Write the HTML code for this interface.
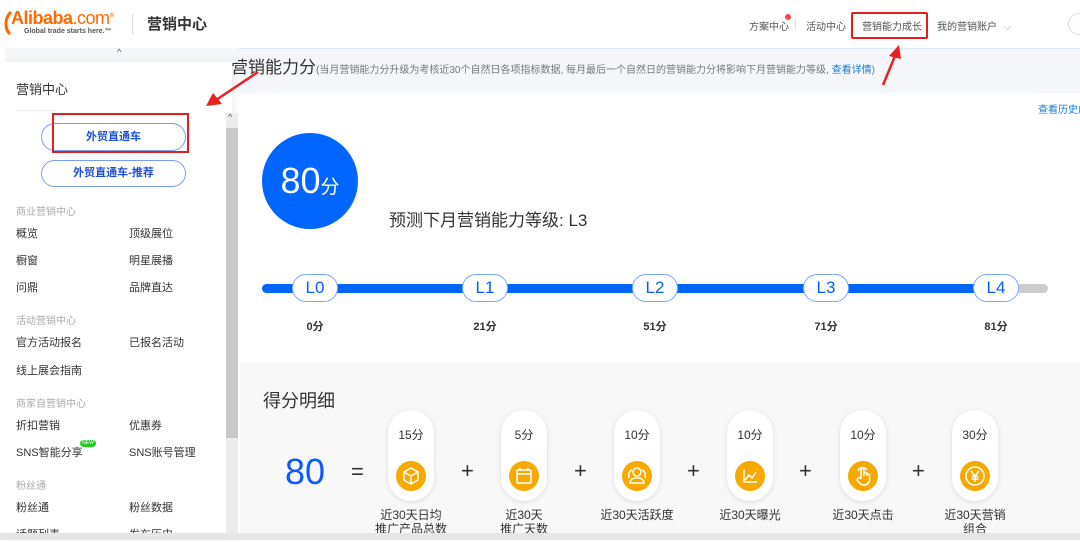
<!DOCTYPE html>
<html><head><meta charset="utf-8"><style>
*{margin:0;padding:0;box-sizing:border-box}
body{width:1080px;height:540px;overflow:hidden;background:#fff;font-family:"Liberation Sans","Noto Sans CJK SC",sans-serif;position:relative;color:#333}
.a{position:absolute;white-space:nowrap}
.nav{font-size:10px;color:#555;top:18px}
.pill{position:absolute;width:46px;height:28px;border:1.5px solid #7aa8ff;border-radius:14px;background:#fff;color:#0a5cff;font-size:17px;text-align:center;line-height:25px;top:274px}
.sc{position:absolute;top:318px;font-size:11px;font-weight:bold;color:#333;width:40px;text-align:center}
.cap{position:absolute;top:410px;width:46px;height:91px;background:#fff;border-radius:23px;box-shadow:0 1px 5px rgba(0,0,0,.12)}
.cap .t{position:absolute;top:16px;width:100%;text-align:center;font-size:12px;color:#333}
.cap svg{position:absolute;left:8px;top:51px}
.lb{position:absolute;top:508px;width:90px;text-align:center;font-size:12px;color:#333;line-height:14px}
.plus{position:absolute;top:458px;font-size:22px;color:#333}
.m{font-size:11px;color:#333;position:absolute}
.g{font-size:10px;color:#aaa;position:absolute}
</style></head><body>
<!-- header -->
<svg class="a" style="left:2px;top:10px" width="20" height="26"><path d="M9 2 C2 8 3 20 8 24" stroke="#ff6a00" stroke-width="3" fill="none"/></svg>
<div class="a" style="left:11px;top:8px;font-size:18px;font-weight:bold;color:#ff6a00;letter-spacing:-0.5px">Alibaba<span style="font-weight:normal">.com</span><sup style="font-size:6px">®</sup></div>
<div class="a" style="left:24px;top:28px;font-size:7px;color:#555;font-weight:bold">Global trade starts here.™</div>
<div class="a" style="left:132px;top:14px;width:1px;height:20px;background:#ddd"></div>
<div class="a" style="left:147px;top:13px;font-size:15px;font-weight:bold;color:#333">营销中心</div>
<div class="a nav" style="left:749px">方案中心</div>
<div class="a" style="left:785px;top:14px;width:6px;height:6px;border-radius:50%;background:#f45"></div>
<div class="a" style="left:795px;top:19px;width:1px;height:10px;background:#ddd"></div>
<div class="a nav" style="left:806px">活动中心</div>
<div class="a nav" style="left:862px">营销能力成长</div>
<div class="a" style="left:851px;top:12px;width:77px;height:27px;border:2px solid #e02020;border-radius:2px"></div>
<div class="a nav" style="left:937px">我的营销账户 <span style="color:#aaa;margin-left:4px">⌵</span></div>
<div class="a" style="left:1068px;top:13px;width:30px;height:22px;border:1px solid #ddd;border-radius:11px"></div>
<!-- main bg -->
<div class="a" style="left:5px;top:48px;width:1075px;height:45px;background:#f4f6f9;border-top:1px solid #dde6f3"></div>
<div class="a" style="left:197px;top:53px;font-size:17px;color:#333">当月营销能力分<span style="font-size:10px;color:#777">(当月营销能力分升级为考核近30个自然日各项指标数据, 每月最后一个自然日的营销能力分将影响下月营销能力等级, <span style="color:#1a7ad8">查看详情</span>)</span></div>
<div class="a" style="left:1038px;top:101px;font-size:10px;color:#1a7ad8">查看历史成</div>
<div class="a" style="left:262px;top:133px;width:96px;height:96px;border-radius:50%;background:#0066ff;color:#fff;text-align:center;line-height:96px;font-size:36px">80<span style="font-size:19px">分</span></div>
<div class="a" style="left:389px;top:206px;font-size:17px;color:#333">预测下月营销能力等级: L3</div>
<div class="a" style="left:262px;top:284px;width:786px;height:9px;border-radius:5px;background:#ccc"></div>
<div class="a" style="left:262px;top:284px;width:756px;height:9px;border-radius:5px;background:#0066ff"></div>
<div class="pill" style="left:292px">L0</div><div class="pill" style="left:462px">L1</div><div class="pill" style="left:632px">L2</div><div class="pill" style="left:803px">L3</div><div class="pill" style="left:973px">L4</div>
<div class="sc" style="left:295px">0分</div><div class="sc" style="left:465px">21分</div><div class="sc" style="left:635px">51分</div><div class="sc" style="left:806px">71分</div><div class="sc" style="left:976px">81分</div>
<!-- lower -->
<div class="a" style="left:240px;top:362px;width:840px;height:172px;background:#f8f8f8"></div>
<div class="a" style="left:263px;top:387px;font-size:18px;color:#333">得分明细</div>
<div class="a" style="left:285px;top:451px;font-size:36px;color:#0a5cff">80</div>
<div class="a" style="left:351px;top:459px;font-size:22px;color:#333">=</div>
<div class="cap" style="left:388px"><div class="t">15分</div><svg width="30" height="30"><circle cx="15" cy="15" r="15" fill="#f7a900"/><g fill="none" stroke="#fff" stroke-width="1.5" stroke-linejoin="round"><path d="M15 7 L22 11 L22 19 L15 23 L8 19 L8 11 Z M8 11 L15 15 L22 11 M15 15 L15 23"/></g></svg></div>
<div class="cap" style="left:501px"><div class="t">5分</div><svg width="30" height="30"><circle cx="15" cy="15" r="15" fill="#f7a900"/><g fill="none" stroke="#fff" stroke-width="1.5"><rect x="8" y="9" width="14" height="13" rx="1"/><path d="M8 13 H22 M11 7 V10 M19 7 V10"/></g></svg></div>
<div class="cap" style="left:614px"><div class="t">10分</div><svg width="30" height="30"><circle cx="15" cy="15" r="15" fill="#f7a900"/><g fill="none" stroke="#fff" stroke-width="1.5"><circle cx="15" cy="11" r="4"/><path d="M8 22 C8 15 22 15 22 22 Z M10 9 C7 10 6 14 7 17 M20 9 C23 10 24 14 23 17"/></g></svg></div>
<div class="cap" style="left:727px"><div class="t">10分</div><svg width="30" height="30"><circle cx="15" cy="15" r="15" fill="#f7a900"/><g fill="none" stroke="#fff" stroke-width="1.5"><path d="M9 8 V21 H22 M10 19 L14 14 L17 17 L21 11"/></g></svg></div>
<div class="cap" style="left:840px"><div class="t">10分</div><svg width="30" height="30"><circle cx="15" cy="15" r="15" fill="#f7a900"/><g fill="none" stroke="#fff" stroke-width="1.5" stroke-linejoin="round"><path d="M13 18 V9 C13 7 16 7 16 9 V15 M16 13 C16 11 19 11 19 13 V15 M19 14 C19 12.5 21.5 12.5 21.5 14 V19 C21.5 22 19 24 16 24 C13 24 11 22 9 19 L10 17 C11 16 12 17 13 18"/><path d="M10 10 A5 5 0 0 1 19 9"/></g></svg></div>
<div class="cap" style="left:952px"><div class="t">30分</div><svg width="30" height="30"><circle cx="15" cy="15" r="15" fill="#f7a900"/><g fill="none" stroke="#fff" stroke-width="1.5"><circle cx="15" cy="15" r="9"/><path d="M11 10 L15 15 L19 10 M15 15 V21 M11.5 15.5 H18.5 M11.5 18 H18.5"/></g></svg></div>
<div class="plus" style="left:461px">+</div><div class="plus" style="left:574px">+</div><div class="plus" style="left:687px">+</div><div class="plus" style="left:799px">+</div><div class="plus" style="left:912px">+</div>
<div class="lb" style="left:366px">近30天日均<br>推广产品总数</div>
<div class="lb" style="left:479px">近30天<br>推广天数</div>
<div class="lb" style="left:592px">近30天活跃度</div>
<div class="lb" style="left:705px">近30天曝光</div>
<div class="lb" style="left:818px">近30天点击</div>
<div class="lb" style="left:930px">近30天营销<br>组合</div>
<!-- left panel -->
<div class="a" style="left:5px;top:48px;width:233px;height:14px;background:#f4f6f9"></div>
<div class="a" style="left:117px;top:47px;font-size:9px;color:#555">^</div>
<div class="a" style="left:0;top:62px;width:232px;height:478px;background:#fff;box-shadow:2px 0 6px rgba(0,0,0,.06)"></div>
<div class="a" style="left:16px;top:79px;font-size:13px;color:#333">营销中心</div>
<div class="a" style="left:16px;top:110px;width:40px;height:1px;background:#eee"></div>
<div class="a" style="left:41px;top:123px;width:145px;height:28px;border:1px solid #7a9cf5;border-radius:14px;text-align:center;line-height:26px;font-size:11px;font-weight:bold;color:#1f4fd8">外贸直通车</div>
<div class="a" style="left:41px;top:160px;width:145px;height:27px;border:1px solid #7a9cf5;border-radius:14px;text-align:center;line-height:25px;font-size:11px;font-weight:bold;color:#1f4fd8">外贸直通车-推荐</div>
<div class="a" style="left:52px;top:113px;width:137px;height:40px;border:2px solid #e02020"></div>
<div class="a" style="left:226px;top:113px;width:12px;height:427px;background:#ececec"></div>
<div class="a" style="left:226px;top:128px;width:12px;height:310px;background:#c9c9c9"></div>
<div class="a" style="left:228px;top:112px;font-size:9px;color:#555">^</div>
<div class="g" style="left:16px;top:203px">商业营销中心</div>
<div class="m" style="left:16px;top:225px">概览</div><div class="m" style="left:129px;top:225px">顶级展位</div>
<div class="m" style="left:16px;top:252px">橱窗</div><div class="m" style="left:129px;top:252px">明星展播</div>
<div class="m" style="left:16px;top:279px">问鼎</div><div class="m" style="left:129px;top:279px">品牌直达</div>
<div class="g" style="left:16px;top:312px">活动营销中心</div>
<div class="m" style="left:16px;top:334px">官方活动报名</div><div class="m" style="left:129px;top:334px">已报名活动</div>
<div class="m" style="left:16px;top:362px">线上展会指南</div>
<div class="g" style="left:16px;top:395px">商家自营销中心</div>
<div class="m" style="left:16px;top:417px">折扣营销</div><div class="m" style="left:129px;top:417px">优惠券</div>
<div class="m" style="left:16px;top:444px">SNS智能分享</div><div class="a" style="left:80px;top:440px;width:16px;height:7px;border-radius:4px;background:#2c2;font-size:5px;color:#fff;text-align:center;line-height:7px">NEW</div><div class="m" style="left:129px;top:444px">SNS账号管理</div>
<div class="g" style="left:16px;top:477px">粉丝通</div>
<div class="m" style="left:16px;top:499px">粉丝通</div><div class="m" style="left:129px;top:499px">粉丝数据</div>
<div class="m" style="left:16px;top:526px">话题列表</div><div class="m" style="left:129px;top:526px">发布历史</div>
<div class="a" style="left:0;top:533px;width:1080px;height:7px;background:#e6e6e6"></div>
<!-- arrows -->
<svg class="a" style="left:0;top:0" width="1080" height="540"><g fill="#e82020" stroke="#e82020">
<line x1="258" y1="72" x2="216" y2="100" stroke-width="2.5"/><polygon points="206,106 213,93 222,104" stroke="none"/>
<line x1="883" y1="85" x2="895" y2="56" stroke-width="2.5"/><polygon points="899,45 889,56 901,59" stroke="none"/></g></svg>
</body></html>
